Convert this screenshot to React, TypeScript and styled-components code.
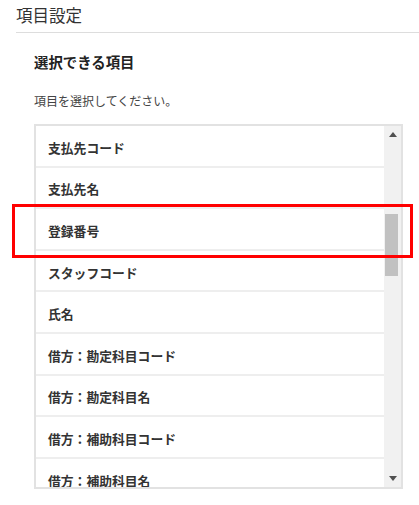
import React from "react";
import styled, { createGlobalStyle } from "styled-components";

const GlobalStyle = createGlobalStyle`
  html, body { margin: 0; padding: 0; background: #ffffff; }
  body { font-family: "Noto Sans CJK JP", "Noto Sans", sans-serif; color: #333333; }
`;

const Page = styled.div`
  position: relative;
  width: 419px;
  height: 505px;
  padding-left: 16px;
  box-sizing: border-box;
  overflow: hidden;
`;

const Header = styled.div`
  height: 33px;
  box-sizing: border-box;
  padding-top: 4px;
  border-bottom: 1px solid #dddddd;
  font-size: 16.5px;
  line-height: 22px;
  color: #333333;
`;

const Section = styled.div`
  padding: 0 16px 0 18px;
`;

const Heading = styled.div`
  margin-top: 19px;
  font-size: 14.4px;
  line-height: 20px;
  font-weight: 700;
  color: #222222;
`;

const Description = styled.div`
  margin-top: 20px;
  font-size: 12px;
  line-height: 18px;
  color: #444444;
`;

const ListBox = styled.div`
  margin-top: 14px;
  height: 365px;
  border: 2px solid #e2e2e2;
  box-sizing: border-box;
  display: flex;
  overflow: hidden;
`;

const Items = styled.div`
  flex: 1;
  overflow: hidden;
`;

const Row = styled.div`
  height: 41.6px;
  box-sizing: border-box;
  border-bottom: 2px solid #eeeeee;
  padding: 3px 0 0 12px;
  display: flex;
  align-items: center;
  font-size: 12.8px;
  font-weight: 700;
  color: #333333;
`;

const ScrollTrack = styled.div`
  width: 17px;
  background: #f1f1f1;
  display: flex;
  flex-direction: column;
  align-items: center;
`;

const ArrowButton = styled.div`
  height: 17px;
  width: 17px;
  display: flex;
  align-items: center;
  justify-content: center;
`;

const TrackSpace = styled.div`
  flex: 1;
  width: 100%;
  position: relative;
`;

const Thumb = styled.div`
  position: absolute;
  left: 1px;
  right: 3px;
  background: #c1c1c1;
`;

const Highlight = styled.div`
  position: absolute;
  left: 12px;
  top: 204px;
  width: 401px;
  height: 54px;
  box-sizing: border-box;
  border: 3px solid #ff0000;
  pointer-events: none;
`;

const items = [
  "支払先コード",
  "支払先名",
  "登録番号",
  "スタッフコード",
  "氏名",
  "借方：勘定科目コード",
  "借方：勘定科目名",
  "借方：補助科目コード",
  "借方：補助科目名",
];

const Arrow = ({ up }: { up: boolean }) => (
  <svg width="8" height="5" viewBox="0 0 8 5">
    {up ? <path d="M0 5 L4 0 L8 5 Z" fill="#505050" /> : <path d="M0 0 L4 5 L8 0 Z" fill="#505050" />}
  </svg>
);

export default function App() {
  const thumbTop = 71;
  const thumbHeight = 62;
  return (
    <>
      <GlobalStyle />
      <Page>
        <Header>項目設定</Header>
        <Section>
          <Heading>選択できる項目</Heading>
          <Description>項目を選択してください。</Description>
          <ListBox>
            <Items>
              {items.map((t) => (
                <Row key={t}>{t}</Row>
              ))}
            </Items>
            <ScrollTrack>
              <ArrowButton>
                <Arrow up />
              </ArrowButton>
              <TrackSpace>
                <Thumb style={{ top: thumbTop, height: thumbHeight }} />
              </TrackSpace>
              <ArrowButton>
                <Arrow up={false} />
              </ArrowButton>
            </ScrollTrack>
          </ListBox>
        </Section>
        <Highlight />
      </Page>
    </>
  );
}
